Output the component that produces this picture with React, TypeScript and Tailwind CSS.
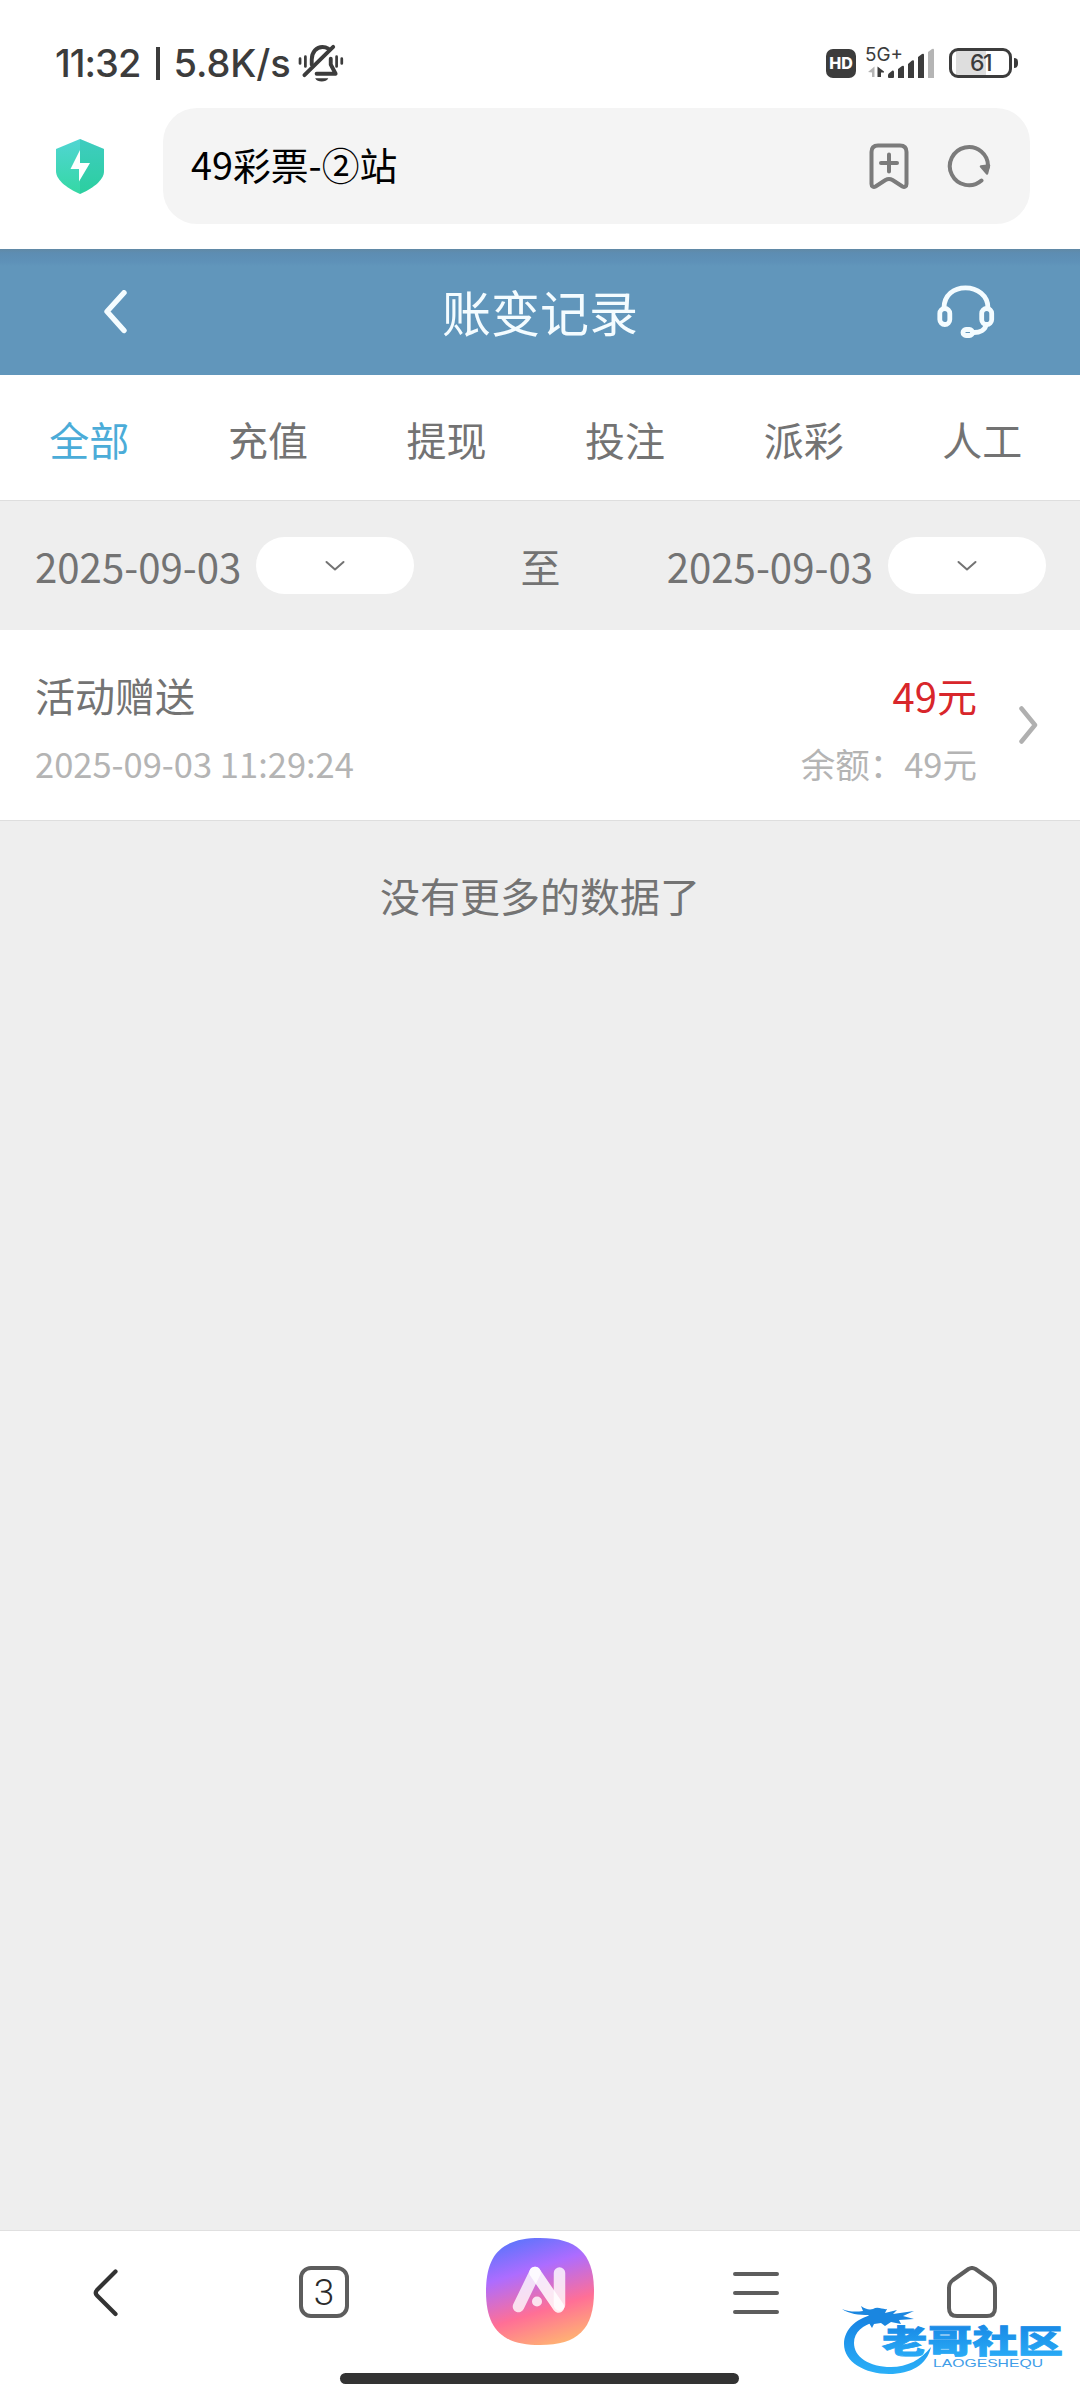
import React from "react";

const tabs = ["全部", "充值", "提现", "投注", "派彩", "人工"];

const StatusBar = () => {
  return (
    <div className="flex items-center justify-between h-[108px] pl-[55px] pr-[62px] pt-[18px] font-['Inter'] text-[#3c3c3c]">
      <div className="flex items-center text-[38px] leading-none font-medium">
        <span className="w-[101px] tracking-[-1px]">11:32</span>
        <div className="w-[3.5px] h-[33px] bg-[#3c3c3c]" />
        <span className="w-[125px] ml-[14px] tracking-[-0.1px]">5.8K/s</span>
        <svg width="46" height="39" viewBox="0 0 47 40" className="-ml-px" fill="none" stroke="#3c3c3c" strokeWidth="4" strokeLinecap="round">
          <path d="M14 21V16C14 8 19 3 25 3C27.500 3 29 3.500 31 4.800" />
          <path d="M33.500 15V21L38.500 30.500H19" strokeLinejoin="round" />
          <path d="M6.500 32L36 3" />
          <path d="M17.500 35H31C29 39.500 19.500 39.500 17.500 35Z" fill="#3c3c3c" stroke="none" />
          <path d="M2 15V20M7.500 13V23M39.500 13V23M44.800 15V20" strokeWidth="2.800" />
        </svg>
      </div>
      <div className="flex items-center">
        <div className="flex items-center justify-center w-[30px] h-[29px] rounded-[7px] bg-[#3c3c3c] text-white text-[16px] font-extrabold leading-none">
          HD
        </div>
        <svg width="70" height="44" viewBox="0 -6 70 44" className="ml-[10px] mb-1">
          <text x="-1" y="16" fontSize="19" fontFamily="Inter" fontWeight="400" fill="#3c3c3c" textLength="38" lengthAdjust="spacingAndGlyphs">5G+</text>
          <path d="M2 27L8.500 21.500V32H6V27.500Z" fill="#b5b5b5" />
          <path d="M11.500 21.500L18 26.500V27.500H15V32H11.500Z" fill="#3c3c3c" />
          <path d="M22 32V30Q22 28.500 24 27.500L26.500 25.500Q28 25 28 27V32Q28 33 27 33H23Q22 33 22 32Z" fill="#3c3c3c" />
          <path d="M32 24L36 21Q38 20 38 22V33H32ZM42 19L46 15.500Q48 14.500 48 16.500V33H42ZM52 12L56 9Q58 8 58 10V33H52Z" fill="#3c3c3c" />
          <path d="M62 7L66 4Q68 3 68 5V33H62Z" fill="#b5b5b5" />
        </svg>
        <div className="flex items-center ml-[13px]">
          <div className="flex items-center justify-center w-[63px] h-[30px] rounded-[9px] border-[3px] border-[#3c3c3c] bg-[linear-gradient(90deg,#fff_4px,#dedede_4px,#dedede_34px,#fff_34px)] text-[23px] font-medium tracking-[-1.5px] leading-none">
            61
          </div>
          <div className="w-1 h-[10px] ml-0.5 rounded-r bg-[#3c3c3c]" />
        </div>
      </div>
    </div>
  );
};

const AddressBar = () => {
  return (
    <div className="flex items-center h-[141px] pl-[55px] pb-[25px]">
      <svg width="50" height="56" viewBox="0 0 50 56" className="mt-0.5">
        <defs>
          <linearGradient id="shield" x1="0" y1="0" x2="0" y2="1">
            <stop offset="0" stopColor="#50d5d3" />
            <stop offset="1" stopColor="#35d8a4" />
          </linearGradient>
        </defs>
        <path d="M25 0L49 10V32C49 42 36 50 25 55C14 50 1 42 1 32V10Z" fill="url(#shield)" />
        <path d="M25 0L49 10V32C49 42 36 50 25 55Z" fill="#18b896" fillOpacity="0.300" />
        <path d="M25 11L15.500 30H24V42.500L35 24H25Z" fill="#fff" />
      </svg>
      <div className="flex items-center w-[867px] h-[116px] ml-[58px] pl-[28px] pr-[39px] rounded-[34px] bg-[#f4f4f4]">
        <span className="flex-1 pb-1 text-[37.8px] leading-none text-black">49彩票-②站</span>
        <svg width="40" height="46" viewBox="0 0 40 46" fill="none" stroke="#7b7b7b" strokeWidth="4" strokeLinecap="round" strokeLinejoin="round">
          <path d="M2.500 9C2.500 4.500 4.500 2.500 9 2.500H31C35.500 2.500 37.500 4.500 37.500 9V41C37.500 43.500 35.500 44.500 33.500 43.500L23.500 37C21 35.500 19 35.500 16.500 37L6.500 43.500C4.500 44.500 2.500 43.500 2.500 41Z" />
          <path d="M20 11.500V28.500M12 20H28" />
        </svg>
        <svg width="44" height="44" viewBox="0 0 44 44" className="ml-[38px]" fill="none" stroke="#7b7b7b" strokeWidth="4" strokeLinecap="round">
          <path d="M34.500 36.500A19.100 19.100 0 1 1 41 23" />
          <path d="M34 22.500L42 21.500L40 29.500Z" fill="#7b7b7b" strokeWidth="2.500" strokeLinejoin="round" />
        </svg>
      </div>
    </div>
  );
};

const Header = () => {
  return (
    <div className="flex items-center justify-between h-[126px] pl-[104px] pr-[85px] bg-[linear-gradient(180deg,#6189a5_0px,#5d8db2_4px,#5e91b8_13px,#6196bb_17px)]">
      <svg width="24" height="44" viewBox="0 0 24 44" fill="none" stroke="#f4fcff" strokeWidth="5.400" strokeLinecap="round" strokeLinejoin="round" className="mb-px mr-[15px]">
        <path d="M20 2.800L3 21.500L20 40.500" />
      </svg>
      <h1 className="pb-[3px] text-[49px] leading-none text-[#f4fcff]">账变记录</h1>
      <svg width="58" height="54" viewBox="0 0 58 54" fill="none" stroke="#f4fcff" strokeWidth="4.800" strokeLinecap="round" className="mb-px">
        <path d="M7 23C7 10 17 2.800 28.500 2.800S51 10 51 23" />
        <rect x="2.800" y="23.500" width="10" height="16" rx="5" />
        <rect x="44.700" y="23.500" width="10" height="16" rx="5" />
        <path d="M49 40C48 45 43 47.500 37 47.500" />
        <rect x="26" y="44.500" width="9.500" height="6" rx="3" />
      </svg>
    </div>
  );
};

const DateSelect = () => {
  return (
    <div className="flex items-center">
      <span className="pt-0.5 text-[40.2px] leading-none">2025-09-03</span>
      <div className="flex items-center justify-center w-[158px] h-[57px] ml-[15px] rounded-full bg-white">
        <svg width="20" height="12" viewBox="0 0 20 12" fill="none" stroke="#737373" strokeWidth="2" strokeLinecap="round" strokeLinejoin="round">
          <path d="M1.500 2L10 9.500L18.500 2" />
        </svg>
      </div>
    </div>
  );
};

const Watermark = () => {
  return (
    <svg width="224" height="76" viewBox="0 0 224 76" className="absolute left-[841px] top-[70px]">
      <defs>
        <linearGradient id="wave" x1="0" y1="0" x2="0" y2="1">
          <stop offset="0" stopColor="#1580e2" />
          <stop offset="1" stopColor="#2bb0f8" />
        </linearGradient>
      </defs>
      <path d="M36 13C16 16 3 28 3 43C3 61 24 73 48 73C70 73 86 64 90 46C80 59 66 66 50 66C28 66 13 56 13 42C13 31 22 24 34 21Z" fill="url(#wave)" />
      <path d="M1 8C8 11 15 11 22 10L20 5C24 8 28 9 32 8C37 5 42 9 46 8L44 12L56 9L52 13L73 10L62 15L73 18L58 19L60 23L50 21L44 25L40 22L33 23L31 27L28 22L20 22L28 14C18 14 8 13 1 8Z" fill="#1a86e0" />
      <text x="41" y="52" fontSize="32" fontWeight="900" fontFamily="Noto Sans CJK SC" fill="url(#wave)" stroke="url(#wave)" strokeWidth="0.800" textLength="181" lengthAdjust="spacingAndGlyphs">老哥社区</text>
      <text x="92" y="66" fontSize="11" fontFamily="Liberation Sans" fill="#3f9de8" textLength="110" lengthAdjust="spacingAndGlyphs">LAOGESHEQU</text>
    </svg>
  );
};

const BottomBar = () => {
  return (
    <div className="relative h-[170px] border-t border-[#e0e0e0] bg-white">
      <div className="flex items-start h-[142px] pl-[92px] pt-[7px]">
        <svg width="26" height="48" viewBox="0 0 26 48" fill="none" stroke="#333" strokeWidth="4.200" strokeLinecap="round" strokeLinejoin="round" className="mt-[31px]">
          <path d="M23.500 2.500L5 21Q2.500 24 5 26.500L23.500 45" />
        </svg>
        <div className="flex items-center justify-center w-[50px] h-[52px] mt-[28px] ml-[181px] rounded-[12px] border-4 border-[#5d5d5d] font-['Roboto'] text-[37px] font-light leading-none text-[#2b2b2b]">
          3
        </div>
        <svg width="108" height="107" viewBox="0 0 108 107" className="ml-[137px]">
          <defs>
            <linearGradient id="ai" x1="0.300" y1="0" x2="0.620" y2="1">
              <stop offset="0" stopColor="#5e74fc" />
              <stop offset="0.300" stopColor="#ad6cff" />
              <stop offset="0.680" stopColor="#ff6f96" />
              <stop offset="1" stopColor="#ffb074" />
            </linearGradient>
          </defs>
          <path d="M54 0C92 0 108 16 108 53.500S92 107 54 107S0 91 0 53.500S16 0 54 0Z" fill="url(#ai)" />
          <g fill="none" stroke="#fff" strokeWidth="11.500" strokeLinecap="round">
            <path d="M32.500 68.500L49 34.500" strokeOpacity="0.780" />
            <path d="M73.500 35V67" strokeOpacity="0.800" />
            <path d="M49 34.500L72.500 69" strokeOpacity="0.850" />
          </g>
          <circle cx="51" cy="63.500" r="5" fill="#fff" fillOpacity="0.800" />
        </svg>
        <svg width="46" height="44" viewBox="0 0 46 44" className="mt-[33px] ml-[139px]" stroke="#5d5d5d" strokeWidth="4" strokeLinecap="round">
          <path d="M2 3H44M2 22H44M2 41H44" />
        </svg>
        <svg width="50" height="52" viewBox="0 0 50 52" className="mt-[28px] ml-[168px]" fill="none" stroke="#5d5d5d" strokeWidth="4" strokeLinejoin="round">
          <path d="M21.500 3Q25 1 28.500 3L44 14Q48 17 48 22V42Q48 50 40 50H10Q2 50 2 42V22Q2 17 6 14Z" />
        </svg>
      </div>
      <div className="w-[399px] h-[11px] ml-[340px] rounded-full bg-[#333]" />
      <Watermark />
    </div>
  );
};

const App = () => {
  return (
    <div className="flex flex-col w-[1080px] h-[2400px] overflow-hidden bg-white font-['Noto_Sans_CJK_SC',sans-serif] text-[#737373]">
      <StatusBar />
      <AddressBar />
      <Header />
      <div className="flex h-[125px] pt-[3px]">
        {tabs.map((tab, index) => (
          <div
            key={tab}
            className={`flex items-center justify-center w-[178.6px] text-[40px] leading-none ${
              index === 0 ? "text-[#4bacd8]" : ""
            }`}
          >
            {tab}
          </div>
        ))}
      </div>
      <div className="flex items-center justify-between h-[130px] pl-[35px] pr-[34px] border-t border-[#dedede] bg-[#eee]">
        <DateSelect />
        <span className="text-[40px] leading-none">至</span>
        <DateSelect />
      </div>
      <div className="flex items-center h-[191px] pl-[35px] pr-[42px] border-b border-[#dedede]">
        <div className="flex-1 pt-[7px]">
          <p className="text-[40px] leading-[68px]">活动赠送</p>
          <p className="text-[34.5px] leading-[68px] text-[#b4b4b4]">2025-09-03 11:29:24</p>
        </div>
        <div className="pt-[7px] text-right">
          <p className="text-[40px] leading-[68px] text-[#d8262b]">49元</p>
          <p className="text-[34.5px] leading-[68px] text-[#b4b4b4]">余额：49元</p>
        </div>
        <svg width="19" height="38" viewBox="0 0 19 38" fill="none" stroke="#b0b0b0" strokeWidth="4.500" strokeLinecap="round" strokeLinejoin="round" className="ml-[42px]">
          <path d="M2.500 2.500L16 19L2.500 35.500" />
        </svg>
      </div>
      <div className="flex-1 pt-[54px] bg-[#eee] text-center text-[40px] leading-none">
        没有更多的数据了
      </div>
      <BottomBar />
    </div>
  );
};

export default App;
